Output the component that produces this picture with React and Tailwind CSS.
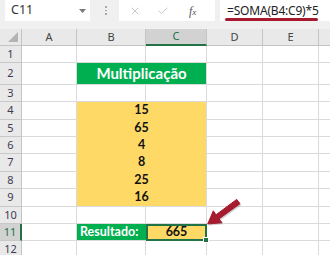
import React from 'react';
import { X, Check } from 'lucide-react';

const rows = [
  { n: 1, h: 'h-[17px]' },
  { n: 2, h: 'h-[22px]', title: 'Multiplicação' },
  { n: 3, h: 'h-[17px]' },
  { n: 4, h: 'h-[18px]', value: '15' },
  { n: 5, h: 'h-[17px]', value: '65' },
  { n: 6, h: 'h-[17px]', value: '4' },
  { n: 7, h: 'h-[18px]', value: '8' },
  { n: 8, h: 'h-[17px]', value: '25' },
  { n: 9, h: 'h-[18px]', value: '16', last: true },
  { n: 10, h: 'h-[17px]' },
  { n: 11, h: 'h-[17px]', result: true },
  { n: 12, h: 'h-[18px]' },
];

const cellFont = { fontFamily: 'Lato, "Liberation Sans", sans-serif' };
const uiFont = { fontFamily: '"Noto Sans", "Liberation Sans", sans-serif' };

function Blank({ w }) {
  return <div className={`${w} shrink-0 border-r border-b border-[#dadada]`} />;
}

function HeadCell({ w, label, active }) {
  return (
    <div
      className={`${w} shrink-0 flex items-center justify-center text-[11px] border-r ${
        active
          ? 'bg-[#d2d2d2] text-[#217346] border-b-2 border-b-[#217346] border-r-[#c4c4c4]'
          : 'bg-[#e9e9e9] text-[#444] border-b border-[#c4c4c4]'
      }`}
      style={uiFont}
    >
      {label}
    </div>
  );
}

function Row({ r }) {
  return (
    <div className={`flex ${r.h}`}>
      <div
        className={`w-[22px] shrink-0 flex items-center justify-center text-[11px] border-b border-[#c8c8c8] ${
          r.result
            ? 'bg-[#d2d2d2] text-[#217346] border-r-2 border-r-[#217346]'
            : 'bg-[#e9e9e9] text-[#3b3b52] border-r border-r-[#c4c4c4]'
        }`}
        style={uiFont}
      >
        {r.n}
      </div>
      <Blank w="w-[55px]" />
      {r.title && (
        <div
          className="w-[130px] shrink-0 flex items-center justify-center bg-[#00b050] text-white font-bold text-[15px] border-r border-b border-[#dadada]"
          style={cellFont}
        >
          {r.title}
        </div>
      )}
      {r.value && (
        <div
          className={`w-[130px] shrink-0 flex items-center justify-center bg-[#ffd966] text-[#111] font-bold text-[12.5px] border-r border-r-[#dadada] border-b ${
            r.last ? 'border-b-[#dadada]' : 'border-b-[#ffd966]'
          }`}
          style={cellFont}
        >
          {r.value}
        </div>
      )}
      {r.result && (
        <>
          <div
            className="w-[69px] shrink-0 flex items-center pl-[3px] bg-[#00b050] text-white font-bold text-[12.5px] border-b border-[#dadada]"
            style={cellFont}
          >
            Resultado:
          </div>
          <div
            className="relative w-[61px] shrink-0 flex items-center justify-center bg-[#ffd966] text-[#111] font-bold text-[12.5px] border-2 border-[#217346]"
            style={cellFont}
          >
            665
            <div className="absolute -right-[4px] -bottom-[4px] w-[6px] h-[6px] bg-[#217346] border border-white" />
          </div>
        </>
      )}
      {!r.title && !r.value && !r.result && (
        <>
          <Blank w="w-[69px]" />
          <Blank w="w-[61px]" />
        </>
      )}
      <Blank w="w-[56px]" />
      <Blank w="w-[56px]" />
      <Blank w="w-[40px]" />
    </div>
  );
}

export default function App() {
  return (
    <div className="relative w-[330px] h-[255px] overflow-hidden bg-white">
      {/* formula bar */}
      <div className="flex items-start h-[29px] bg-[#f0f0f0]">
        <div className="ml-[5px] w-[85px] h-[21px] bg-white flex items-center justify-between pl-[6px] pr-[4px]">
          <span className="text-[12.5px] text-[#333]" style={uiFont}>C11</span>
          <svg width="7" height="4" viewBox="0 0 7 4">
            <polygon points="0,0 7,0 3.5,4" fill="#7a7a7a" />
          </svg>
        </div>
        <div className="w-[29px] h-[21px] flex flex-col items-center justify-center gap-[2px] pl-[3px]">
          <div className="w-[1.5px] h-[1.5px] bg-[#a8a8a8]" />
          <div className="w-[1.5px] h-[1.5px] bg-[#a8a8a8]" />
          <div className="w-[1.5px] h-[1.5px] bg-[#a8a8a8]" />
        </div>
        <div className="w-[96px] h-[21px] bg-white flex items-center">
          <X className="ml-[10px] w-[12px] h-[12px] text-[#b5b5b5]" strokeWidth={1.5} />
          <Check className="ml-[16px] w-[12px] h-[12px] text-[#b5b5b5]" strokeWidth={1.5} />
          <span
            className="ml-[20px] text-[12px] italic text-[#555]"
            style={{ fontFamily: '"Liberation Serif", serif' }}
          >
            f<span className="text-[9px]">x</span>
          </span>
        </div>
        <div className="relative ml-[5px] w-[110px] h-[21px] bg-white flex items-center">
          <span className="pl-[7px] text-[12px] text-[#222] tracking-[-0.2px]" style={uiFont}>
            =SOMA(B4:C9)*5
          </span>
          <div className="absolute left-[5px] top-[18px] w-[93px] h-[3px] rounded-full bg-[#a6192e]" />
        </div>
      </div>

      {/* column headers */}
      <div className="flex h-[17px]">
        <div className="w-[22px] shrink-0 flex items-end justify-end bg-[#e9e9e9] border-r border-b border-[#c4c4c4] pr-[3px] pb-[3px]">
          <svg width="10" height="10" viewBox="0 0 10 10">
            <polygon points="10,0 10,10 0,10" fill="#b4b4b4" />
          </svg>
        </div>
        <HeadCell w="w-[55px]" label="A" />
        <HeadCell w="w-[69px]" label="B" />
        <HeadCell w="w-[61px]" label="C" active />
        <HeadCell w="w-[56px]" label="D" />
        <HeadCell w="w-[56px]" label="E" />
        <HeadCell w="w-[40px]" label="" />
      </div>

      {rows.map((r) => (
        <Row key={r.n} r={r} />
      ))}

      {/* annotation arrow */}
      <svg className="absolute left-[203px] top-[195px]" width="42" height="36" viewBox="0 0 42 36">
        <polygon
          points="6,30.5 20.3,29.2 17.3,25.4 38.3,10.2 35,5.9 14.3,21.3 11.6,17.3"
          fill="#000"
          opacity="0.18"
        />
        <polygon
          points="4.7,29 19,27.7 16,23.9 37,8.7 33.7,4.4 13,19.8 10.3,15.8"
          fill="#a61c2e"
          stroke="#a61c2e"
          strokeLinejoin="round"
          strokeWidth="1"
        />
      </svg>
    </div>
  );
}
